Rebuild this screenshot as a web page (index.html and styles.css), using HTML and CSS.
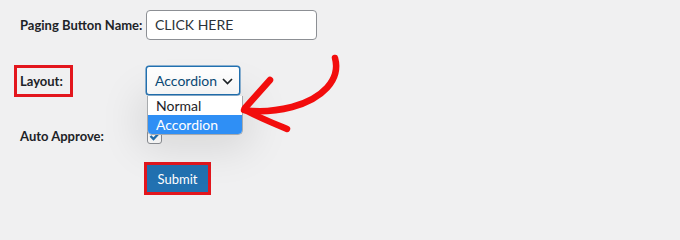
FILE: index.html
```html
<!DOCTYPE html>
<html>
<head>
<meta charset="utf-8">
<link rel="stylesheet" href="styles.css">
</head>
<body>
<form class="form">
  <div class="row row-name">
    <label class="label">Paging Button Name:</label>
    <div class="control"><div class="text-input">CLICK HERE</div></div>
  </div>
  <div class="row row-layout">
    <label class="label label-marked">Layout:</label>
    <div class="control select-wrap">
      <div class="select">
        <span>Accordion</span>
        <svg class="chevron" width="11" height="7" viewBox="0 0 11 7"><path d="M1 1 L5.5 5.5 L10 1" fill="none" stroke="#1d2327" stroke-width="1.7"/></svg>
      </div>
      <ul class="options">
        <li class="option">Normal</li>
        <li class="option option-active">Accordion</li>
      </ul>
    </div>
  </div>
  <div class="row row-approve">
    <label class="label">Auto Approve:</label>
    <div class="control">
      <span class="checkbox"><svg width="12" height="10" viewBox="0 0 12 10"><path d="M1.5 5 L4.5 8 L10.5 1.5" fill="none" stroke="#2271b1" stroke-width="2.4"/></svg></span>
    </div>
  </div>
  <div class="row row-submit">
    <span class="label"></span>
    <div class="control"><span class="submit-mark"><button type="button" class="submit">Submit</button></span></div>
  </div>
</form>
<svg class="arrow" width="680" height="205" viewBox="0 0 680 205">
  <path d="M335 58 C341 80 322 99 292 107 C272 112 256 112 244 110" fill="none" stroke="#f20d0d" stroke-width="6.5" stroke-linecap="round"/>
  <path d="M270 80 L245 108" fill="none" stroke="#f20d0d" stroke-width="6.5" stroke-linecap="round"/>
  <path d="M245 110 C260 118 275 124 287 129" fill="none" stroke="#f20d0d" stroke-width="6.5" stroke-linecap="round"/>
</svg>
</body>
</html>
```
FILE: styles.css
```css
html, body {
  margin: 0;
  padding: 0;
}
body {
  width: 680px;
  height: 205px;
  background: #f0f0f1;
  font-family: Lato, "Noto Sans", sans-serif;
  color: #1d2327;
  position: relative;
  overflow: hidden;
}
.form {
  padding: 10px 0 0 20px;
  display: flex;
  flex-direction: column;
}
.row {
  display: grid;
  grid-template-columns: 126px auto;
  align-items: center;
}
.label {
  font-size: 13px;
  font-weight: 700;
  line-height: 18px;
  white-space: nowrap;
  color: #1d2327;
}
.row-name { height: 30px; }
.row-layout { margin-top: 25px; height: 32px; }
.row-approve { margin-top: 30px; height: 17px; }
.row-submit { margin-top: 18px; }

.text-input {
  width: 171px;
  height: 30px;
  box-sizing: border-box;
  border: 1px solid #8c8f94;
  border-radius: 4px;
  background: #fff;
  font-size: 14px;
  line-height: 28px;
  padding-left: 8px;
  color: #2c3338;
}
.label-marked {
  margin-left: -6px;
  width: 59px;
  height: 32px;
  box-sizing: border-box;
  border: 3px solid #e3161d;
  padding-left: 3px;
  display: flex;
  align-items: center;
  padding-bottom: 1px;
}
.select-wrap {
  position: relative;
  height: 32px;
}
.select {
  width: 94px;
  height: 29px;
  margin-top: 1px;
  box-sizing: border-box;
  border: 1.5px solid #2271b1;
  box-shadow: 0 0 0 0.5px #2271b1;
  border-radius: 3px;
  background: #fff;
  color: #0a4b78;
  font-size: 14px;
  display: flex;
  align-items: center;
  justify-content: space-between;
  padding: 0 6px 0 8px;
}
.chevron { margin-top: 1px; }
.options {
  position: absolute;
  left: 1px;
  top: 31px;
  width: 94px;
  margin: 0;
  padding: 0;
  list-style: none;
  background: #fff;
  border: 1px solid #a7aaad;
  border-top: none;
  border-radius: 0 0 5px 5px;
  overflow: hidden;
  box-shadow: 0 6px 40px 8px rgba(0,0,0,0.10);
  z-index: 2;
}
.option {
  height: 19px;
  line-height: 19px;
  font-size: 14px;
  padding-left: 8px;
  color: #1d2327;
}
.option-active {
  background: #2f8ff5;
  color: #fff;
}
.checkbox {
  display: flex;
  align-items: center;
  justify-content: center;
  width: 15px;
  height: 15px;
  box-sizing: border-box;
  border: 1px solid #8c8f94;
  border-radius: 3px;
  background: #fff;
  margin-left: 1px;
}
.submit-mark {
  display: inline-block;
  margin-left: -2px;
  border: 3px solid #e3161d;
}
.submit {
  display: block;
  width: 61px;
  height: 27px;
  margin: 0;
  border: none;
  border-radius: 0;
  background: #2271b1;
  color: #fff;
  font-family: Lato, "Noto Sans", sans-serif;
  font-size: 13px;
  padding: 0;
}
.arrow {
  position: absolute;
  left: 0;
  top: 0;
  pointer-events: none;
  z-index: 3;
}
```
